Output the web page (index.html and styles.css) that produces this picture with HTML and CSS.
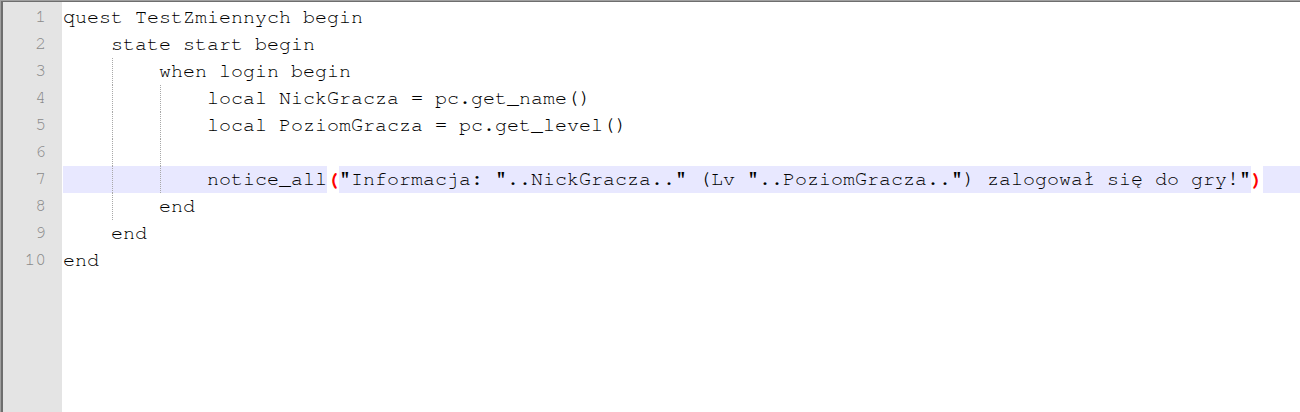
FILE: index.html
```html
<!DOCTYPE html>
<html lang="pl">
<head>
<meta charset="utf-8">
<title>Edytor</title>
<link rel="stylesheet" href="styles.css">
</head>
<body>
<div class="editor">
  <div class="gutter">
    <div class="num">1</div>
    <div class="num">2</div>
    <div class="num">3</div>
    <div class="num">4</div>
    <div class="num">5</div>
    <div class="num">6</div>
    <div class="num">7</div>
    <div class="num">8</div>
    <div class="num">9</div>
    <div class="num">10</div>
  </div>
  <div class="code">
    <div class="line">quest TestZmiennych begin</div>
    <div class="line"><span class="ind">    </span>state start begin</div>
    <div class="line"><span class="ind">    </span><span class="ind guide">    </span>when login begin</div>
    <div class="line"><span class="ind">    </span><span class="ind guide">    </span><span class="ind guide">    </span>local NickGracza = pc.get_name()</div>
    <div class="line"><span class="ind">    </span><span class="ind guide">    </span><span class="ind guide">    </span>local PoziomGracza = pc.get_level()</div>
    <div class="line"><span class="ind">    </span><span class="ind guide">    </span><span class="ind guide">    </span></div>
    <div class="line current"><span class="ind">    </span><span class="ind guide">    </span><span class="ind guide">    </span>notice_all<span class="brace">(</span>"Informacja: "..NickGracza.." (Lv "..PoziomGracza..") zalogował się do gry!"<span class="brace">)</span></div>
    <div class="line"><span class="ind">    </span><span class="ind guide">    </span>end</div>
    <div class="line"><span class="ind">    </span>end</div>
    <div class="line">end</div>
  </div>
</div>
</body>
</html>
```

FILE: styles.css
```css
html, body {
  margin: 0;
  padding: 0;
  background: #ffffff;
}

.editor {
  display: flex;
  height: 412px;
  box-sizing: border-box;
  border-top: 1px solid #a0a0a0;
  border-left: 1px solid #a0a0a0;
  overflow: hidden;
}

.gutter {
  width: 61px;
  flex: 0 0 61px;
  box-sizing: border-box;
  background: #e4e4e4;
  border-top: 1px solid #6e6e6e;
  border-left: 2px solid #6e6e6e;
  padding-top: 2px;
  padding-right: 16px;
  font-family: "Nimbus Mono PS", "FreeMono", "Courier 10 Pitch", "Liberation Mono", monospace;
  font-size: 18px;
  color: #8a8a8a;
  text-align: right;
}

.num {
  height: 27px;
  line-height: 27px;
}

.code {
  flex: 1;
  border-top: 1px solid #6e6e6e;
  padding-top: 2px;
  padding-left: 1px;
  font-family: "Nimbus Mono PS", "FreeMono", "Courier 10 Pitch", "Liberation Mono", monospace;
  font-size: 20px;
  color: #000000;
}

.line {
  height: 27px;
  line-height: 27px;
  white-space: pre;
}

.line.current {
  background: #e8e8ff;
}

.ind {
  display: inline-block;
  height: 27px;
  vertical-align: top;
}

.ind.guide {
  background-image: repeating-linear-gradient(to bottom, #a8a8a8 0 1px, transparent 1px 2px);
  background-size: 1px 100%;
  background-position: 1px 0;
  background-repeat: no-repeat;
}

.brace {
  display: inline-block;
  height: 27px;
  vertical-align: top;
  background: #ffffff;
  color: #ff0000;
  font-weight: bold;
}
```
